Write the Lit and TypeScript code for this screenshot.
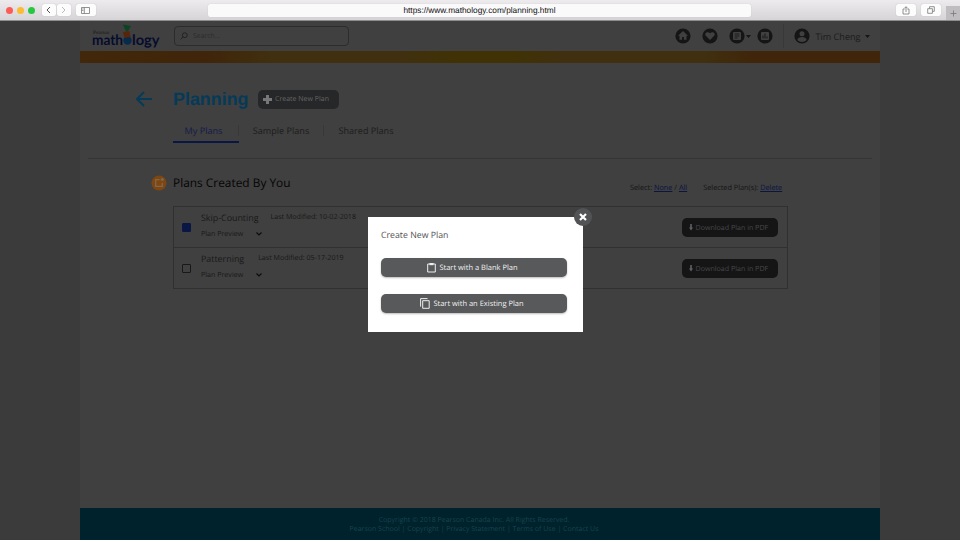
import { LitElement, html, svg, css } from "lit";
import { customElement } from "lit/decorators.js";

interface Plan { name: string; modified: string; selected: boolean; gap: number; }

const plans: Plan[] = [
  { name: "Skip-Counting", modified: "10-02-2018", selected: true, gap: 12 },
  { name: "Patterning", modified: "05-17-2019", selected: false, gap: 14 },
];

const disc = (glyph: unknown) => html`<svg class="disc" viewBox="0 0 16 16"><circle cx="8" cy="8" r="7.6" fill="#151515"/>${glyph}</svg>`;
const caret = html`<svg class="caret" viewBox="0 0 5 3"><path d="M0 0h5L2.5 3z" fill="#151515"/></svg>`;

@customElement("app-root")
export class AppRoot extends LitElement {
  static styles = css`
    :host { display: block; width: 960px; height: 540px; overflow: hidden; position: relative; background: #3b3b3b; font-family: "Open Sans", "Noto Sans", sans-serif; color: #181818; text-rendering: geometricPrecision; }
    * { box-sizing: border-box; }
    svg { display: block; flex: none; }
    span, h1, h2, a { white-space: nowrap; }
    .browser { height: 21px; display: flex; align-items: center; background: linear-gradient(#edebed, #d6d4d6); border-bottom: 1px solid #8e8e8e; padding-left: 5.5px; }
    .light { width: 7px; height: 7px; border-radius: 50%; margin-right: 4.1px; }
    .red { background: #fc5b57; } .yellow { background: #fdbc2f; } .green { background: #27c840; }
    .chip { height: 12px; background: #fcfcfc; border-radius: 2px; box-shadow: 0 0 1px #aaa; display: grid; place-items: center; }
    .back { width: 14px; margin-left: 3.2px; } .fwd { width: 14px; margin-left: 1px; } .side { width: 20px; margin-left: 5px; }
    .url { width: 543px; height: 13px; margin-left: 112px; background: #fbfafb; border-radius: 2px; box-shadow: 0 0 1px #bbb; font: 8.3px/13px "Liberation Sans", Arial, sans-serif; color: #111; text-align: center; }
    .share { width: 20px; margin-left: auto; } .tabs-btn { width: 20px; margin-left: 5px; }
    .plus { width: 14px; height: 14px; margin-left: 5px; align-self: flex-end; background: #bfbdbf; display: grid; place-items: center; }
    .page { width: 800px; height: 519px; margin: 0 auto; background: #404040; display: flex; flex-direction: column; }
    header { height: 30px; display: flex; align-items: center; padding-left: 12px; }
    .logo { width: 70px; height: 30px; }
    .search { width: 175px; height: 20px; margin-left: 12px; border: 1px solid #2c2c2c; border-radius: 4px; display: flex; align-items: center; gap: 5px; padding-left: 5px; font-size: 6.9px; color: #2b2b2b; }
    .disc { width: 16px; height: 16px; }
    .caret { width: 5px; height: 3px; }
    .icons { display: flex; align-items: center; margin-left: 326px; }
    .user { height: 24px; margin-left: 10px; padding-left: 10px; border-left: 1px solid #383838; display: flex; align-items: center; gap: 6px; font-size: 9.1px; color: #1b1b1b; }
    .user .caret { margin-left: -2px; }
    .stripe { height: 12px; background: linear-gradient(90deg, #42270a 0%, #40250a 16%, #40300f 24%, #40300f 40%, #403205 47%, #403205 54%, #40300f 60%, #40300f 78%, #40250a 84%, #40250a 100%); }
    .title { display: flex; align-items: center; height: 22px; margin-top: 25px; padding-left: 55px; }
    h1 { margin: 0 0 0 20px; width: 76px; font: bold 17.9px/22px "Liberation Sans", Arial, sans-serif; color: #053a58; }
    .create { width: 81px; height: 19px; margin-left: 9px; border-radius: 5px; background: #262728; color: #656565; display: flex; align-items: center; gap: 3px; padding: 1px 0 0 5px; font-size: 7px; }
    nav { display: flex; height: 24px; margin: 9px 0 0 93px; font-size: 9.1px; line-height: 24px; color: #1c1c1c; }
    nav span { text-align: center; position: relative; }
    .my { width: 66px; padding-right: 5px; border-bottom: 2px solid #0a1745; color: #141b4a; }
    .sample { width: 85px; padding-right: 1px; } .shared { width: 84px; }
    .my::after, .sample::after { content: ""; position: absolute; right: 0; top: 6px; width: 1px; height: 11px; background: #383838; }
    .rule { height: 1px; margin: 15px 8px 0; background: #353535; }
    .heading { display: flex; align-items: center; height: 24px; margin-top: 12px; padding-left: 71px; }
    h2 { margin: 0 0 0 6px; width: 140px; font-weight: 400; font-size: 11.9px; color: #050505; }
    .select { display: flex; margin: 9px 0 0 317px; font-size: 7.3px; color: #141414; gap: 16px; }
    a { color: #0c1440; text-decoration: underline; }
    .plans { width: 615px; margin: 11px 0 0 93px; border: 1px solid #303030; }
    .plan { height: 40px; display: flex; align-items: center; padding: 0 9px 0 8px; }
    .plan + .plan { height: 41px; border-top: 1px solid #303030; }
    .box { width: 9px; height: 9px; border: 1px solid #181818; border-radius: 1px; }
    .box.on { background: #0a1745; border-color: #0a1745; }
    .info { margin-left: 10px; flex: 1; padding-bottom: 3px; }
    .line { display: flex; align-items: center; height: 16.5px; }
    .name { font-size: 8.9px; } .mod, .preview { font-size: 7.1px; }
    .preview { width: 55px; }
    .download { width: 96px; height: 19px; border-radius: 5px; background: #151516; color: #484848; display: flex; align-items: center; gap: 3px; padding: 1px 0 0 6.5px; font-size: 7.1px; }
    footer { height: 32px; margin-top: auto; padding: 9px 12px 0 0; background: #00222c; color: #164450; font-size: 7px; line-height: 8.7px; display: flex; flex-direction: column; align-items: center; }
    .modal { position: absolute; left: 368px; top: 217px; width: 215px; height: 115px; background: #fff; padding: 11px 16px 0 13px; }
    .modal-title { display: block; height: 14px; font-size: 8.75px; line-height: 14px; color: #505050; }
    .action { width: 186px; height: 19px; margin-top: 16px; border-radius: 5px; background: #58595b; color: #f2f2f2; font-size: 7.5px; display: flex; align-items: center; justify-content: center; gap: 3px; padding-right: 3px; box-shadow: 0 1px 2px #bbb; }
    .action + .action { margin-top: 17px; padding-right: 4px; }
    .close { position: absolute; right: -9px; top: -9px; width: 18px; height: 18px; }
  `;

  logo() {
    return html`<svg class="logo" viewBox="0 0 70 30"><text x="1" y="12.6" font-family="Liberation Serif" font-size="5.2" fill="#161616">Pearson</text><g font-family="Lato" font-weight="700" font-size="14.5" fill="#060c2c"><text x="0" y="23.5" textLength="31" lengthAdjust="spacingAndGlyphs">math</text><text x="40" y="23.5" textLength="27.5" lengthAdjust="spacingAndGlyphs">logy</text></g><circle cx="35.5" cy="19.5" r="4.2" fill="#062b4d"/><path d="M31 11l6.5-1 1 6-6 1z" fill="#572509"/><path d="M31 3.5l8 1.5-3 5-2 .4z" fill="#0d4223"/></svg>`;
  }

  row(p: Plan) {
    return html`<div class="plan"><i class="box ${p.selected ? "on" : ""}"></i>
      <div class="info"><div class="line"><span class="name">${p.name}</span><span class="mod" style="margin-left:${p.gap}px">Last Modified: ${p.modified}</span></div>
      <div class="line"><span class="preview">Plan Preview</span><svg width="6" height="4" viewBox="0 0 6 4" fill="none" stroke="#0c0c0c" stroke-width="1.2"><path d="M.5.5L3 3 5.5.5"/></svg></div></div>
      <div class="download"><svg width="4" height="7" viewBox="0 0 4 7" fill="#606060"><path d="M1.2 0h1.6v3.5H4L2 6.5 0 3.5h1.2z"/></svg><span>Download Plan in PDF</span></div></div>`;
  }

  render() {
    return html`
      <div class="browser">
        <i class="light red"></i><i class="light yellow"></i><i class="light green"></i>
        <div class="chip back"><svg width="5" height="8" viewBox="0 0 5 8" fill="none" stroke="#555"><path d="M4 1L1 4l3 3"/></svg></div>
        <div class="chip fwd"><svg width="5" height="8" viewBox="0 0 5 8" fill="none" stroke="#bbb"><path d="M1 1l3 3-3 3"/></svg></div>
        <div class="chip side"><svg width="9" height="7" viewBox="0 0 9 7" fill="none" stroke="#777" stroke-width=".8"><path d="M.5.5h8v6h-8zM3.3.5v6M1.2 2h1.2M1.2 3.5h1.2"/></svg></div>
        <div class="url">https://www.mathology.com/planning.html</div>
        <div class="chip share"><svg width="8" height="9" viewBox="0 0 8 9" fill="none" stroke="#777" stroke-width=".8"><path d="M2.7 3H1v5h6V3H5.3M4 6V.8M2.5 2.2L4 .7l1.5 1.5"/></svg></div>
        <div class="chip tabs-btn"><svg width="8" height="8" viewBox="0 0 8 8" fill="none" stroke="#777" stroke-width=".8"><path d="M2.5 2.5V.7h4.8v4.6H5.5M.7 2.7h4.7v4.6H.7z"/></svg></div>
        <div class="plus"><svg width="7" height="7" viewBox="0 0 7 7" stroke="#777" stroke-width=".8"><path d="M3.5.5v6M.5 3.5h6"/></svg></div>
      </div>
      <div class="page">
        <header>${this.logo()}
          <div class="search"><svg width="8" height="8" viewBox="0 0 8 8" fill="none" stroke="#222"><circle cx="4.8" cy="3.2" r="2.4"/><path d="M3 5L.7 7.3"/></svg><span>Search...</span></div>
          <div class="icons">
            ${disc(svg`<path d="M8 3L3 7.7h1.5v4h2.6V9h1.8v2.7h2.6v-4H13z" fill="#404040"/>`)}
            <i style="width:10.5px"></i>${disc(svg`<path d="M8 12L3.8 7.8C1.8 5.2 5.6 2.6 8 5.3c2.4-2.7 6.2-.1 4.2 2.5z" fill="#404040"/>`)}
            <i style="width:11.5px"></i>${disc(svg`<rect x="4" y="4" width="8" height="8" rx="1" fill="#404040"/><path d="M5.7 6h4.6M5.7 8h4.6M5.7 10h2.8" stroke="#151515" stroke-width=".8"/>`)}
            <i style="width:1px"></i>${caret}
            <i style="width:5.5px"></i>${disc(svg`<rect x="4" y="4" width="8" height="8" rx="1" fill="#404040"/><path d="M6 10.5v-3M8 10.5v-5M10 10.5v-2" stroke="#151515"/>`)}
          </div>
          <div class="user">${disc(svg`<circle cx="8" cy="5.8" r="2.5" fill="#404040"/><path d="M3.3 12c.5-4 8.9-4 9.4 0-2.5 2.5-6.9 2.5-9.4 0z" fill="#404040"/>`)}<span>Tim Cheng</span>${caret}</div>
        </header>
        <div class="stripe"></div>
        <div class="title"><svg width="18" height="18" viewBox="0 0 18 18" fill="none" stroke="#053a58" stroke-width="2"><path d="M17 9H2M9 2L2 9l7 7"/></svg><h1>Planning</h1>
          <div class="create"><svg width="9" height="9" viewBox="0 0 9 9" stroke="#777" stroke-width="3"><path d="M4.5 0v9M0 4.5h9"/></svg><span>Create New Plan</span></div></div>
        <nav><span class="my">My Plans</span><span class="sample">Sample Plans</span><span class="shared">Shared Plans</span></nav>
        <div class="rule"></div>
        <div class="heading"><svg width="16" height="16" viewBox="0 0 16 16"><circle cx="8" cy="8" r="7.5" fill="#80460e"/><path d="M8.5 4.7H4.7v6.6h6.6V8M9.8 4.5h3M11.3 3v3" fill="none" stroke="#75695c" stroke-width="1.3"/></svg><h2>Plans Created By You</h2>
          <div class="select"><span>Select: <a>None</a> / <a>All</a></span><span>Selected Plan(s): <a>Delete</a></span></div></div>
        <div class="plans">${plans.map((p) => this.row(p))}</div>
        <footer><span>Copyright © 2018 Pearson Canada Inc. All Rights Reserved.</span><span>Pearson School | Copyright | Privacy Statement | Terms of Use | Contact Us</span></footer>
      </div>
      <div class="modal"><span class="modal-title">Create New Plan</span>
        <div class="action"><svg width="9" height="11" viewBox="0 0 9 11" fill="none" stroke="#eee"><path d="M.7 2h7.6v8H.7z"/><path d="M2.5 1h4v2.2h-4z" fill="#eee" stroke="none"/></svg><span>Start with a Blank Plan</span></div>
        <div class="action"><svg width="10" height="11" viewBox="0 0 10 11" fill="none" stroke="#eee"><path d="M7.5.6H.6v8M2.7 2.7h6.5v7.6H2.7z"/></svg><span>Start with an Existing Plan</span></div>
        <svg class="close" viewBox="0 0 18 18"><circle cx="9" cy="9" r="9" fill="#525355"/><path d="M6 6l6 6M12 6l-6 6" stroke="#fff" stroke-width="2.2"/></svg>
      </div>`;
  }
}
